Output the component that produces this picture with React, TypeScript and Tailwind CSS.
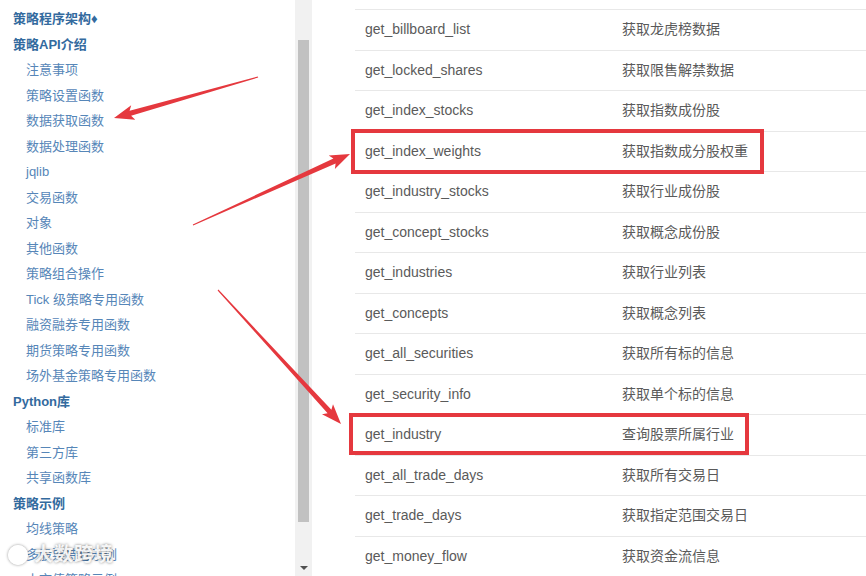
import React from 'react'

type NavItem = { label: string; level: 0 | 1 }

const navItems: NavItem[] = [
  { label: '策略程序架构♦', level: 0 },
  { label: '策略API介绍', level: 0 },
  { label: '注意事项', level: 1 },
  { label: '策略设置函数', level: 1 },
  { label: '数据获取函数', level: 1 },
  { label: '数据处理函数', level: 1 },
  { label: 'jqlib', level: 1 },
  { label: '交易函数', level: 1 },
  { label: '对象', level: 1 },
  { label: '其他函数', level: 1 },
  { label: '策略组合操作', level: 1 },
  { label: 'Tick 级策略专用函数', level: 1 },
  { label: '融资融券专用函数', level: 1 },
  { label: '期货策略专用函数', level: 1 },
  { label: '场外基金策略专用函数', level: 1 },
  { label: 'Python库', level: 0 },
  { label: '标准库', level: 1 },
  { label: '第三方库', level: 1 },
  { label: '共享函数库', level: 1 },
  { label: '策略示例', level: 0 },
  { label: '均线策略', level: 1 },
  { label: '多股票持仓示例', level: 1 },
  { label: '小市值策略示例', level: 1 },
]

const rows: [string, string][] = [
  ['get_billboard_list', '获取龙虎榜数据'],
  ['get_locked_shares', '获取限售解禁数据'],
  ['get_index_stocks', '获取指数成份股'],
  ['get_index_weights', '获取指数成分股权重'],
  ['get_industry_stocks', '获取行业成份股'],
  ['get_concept_stocks', '获取概念成份股'],
  ['get_industries', '获取行业列表'],
  ['get_concepts', '获取概念列表'],
  ['get_all_securities', '获取所有标的信息'],
  ['get_security_info', '获取单个标的信息'],
  ['get_industry', '查询股票所属行业'],
  ['get_all_trade_days', '获取所有交易日'],
  ['get_trade_days', '获取指定范围交易日'],
  ['get_money_flow', '获取资金流信息'],
]

// 红色箭头：尾细头粗
const arrowPoints = (x1: number, y1: number, x2: number, y2: number) => {
  const len = Math.hypot(x2 - x1, y2 - y1)
  const dx = (x2 - x1) / len
  const dy = (y2 - y1) / len
  const nx = -dy
  const ny = dx
  const L = 17
  const bx = x2 - dx * L
  const by = y2 - dy * L
  const wx = bx - dx * 3
  const wy = by - dy * 3
  const p = (x: number, y: number) => `${x.toFixed(1)},${y.toFixed(1)}`
  return [
    p(x1 + nx * 0.6, y1 + ny * 0.6),
    p(bx + nx * 2.6, by + ny * 2.6),
    p(wx + nx * 7.5, wy + ny * 7.5),
    p(x2, y2),
    p(wx - nx * 7.5, wy - ny * 7.5),
    p(bx - nx * 2.6, by - ny * 2.6),
    p(x1 - nx * 0.6, y1 - ny * 0.6),
  ].join(' ')
}

export default function App() {
  return (
    <div
      className="relative w-[866px] h-[576px] overflow-hidden bg-white"
      style={{ fontFamily: '"Liberation Sans", "Noto Sans CJK SC", sans-serif' }}
    >
      <div className="flex h-full">
        {/* 左侧导航 */}
        <div className="w-[295px] pt-[6px] pl-[13px]">
          {navItems.map((item) => (
            <div
              key={item.label}
              className={
                item.level === 0
                  ? 'h-[25.5px] leading-[25.5px] text-[13px] font-bold text-[#336a9e] whitespace-nowrap'
                  : 'h-[25.5px] leading-[25.5px] text-[13px] pl-[13px] text-[#5686b8] whitespace-nowrap'
              }
            >
              {item.label}
            </div>
          ))}
        </div>

        {/* 滚动条 */}
        <div className="w-[17px] h-full bg-[#f1f1f1] flex flex-col items-center">
          <div className="h-[40px]" />
          <div className="w-[11px] h-[482px] bg-[#c1c1c1]" />
          <div className="flex-1 flex items-end pb-[6px]">
            <div className="w-0 h-0 border-l-[4px] border-r-[4px] border-t-[4px] border-l-transparent border-r-transparent border-t-[#505050]" />
          </div>
        </div>

        <div className="w-[43px]" />

        {/* 函数表格 */}
        <div className="flex-1 pt-[9px]">
          {rows.map(([name, desc]) => (
            <div
              key={name}
              className="flex items-center h-[40.5px] border-t border-[#e8e8e8] text-[14px] text-[#5a5a5a]"
            >
              <div className="w-[267px] pl-[10px]">{name}</div>
              <div>{desc}</div>
            </div>
          ))}
        </div>
      </div>

      {/* 红框标注 */}
      <div className="absolute left-[351px] top-[129px] w-[413px] h-[45px] border-[4px] border-[#e5383e]" />
      <div className="absolute left-[349px] top-[413px] w-[400px] h-[42px] border-[4px] border-[#e5383e]" />

      {/* 箭头 */}
      <svg className="absolute left-0 top-0" width="866" height="576" viewBox="0 0 866 576">
        <polygon points={arrowPoints(258, 77, 114, 118)} fill="#e5383e" />
        <polygon points={arrowPoints(193, 225, 350, 154)} fill="#e5383e" />
        <polygon points={arrowPoints(218, 290, 341, 424)} fill="#e5383e" />
      </svg>

      {/* 水印 */}
      <div className="absolute left-[8px] top-[543px] flex items-center gap-[6px] text-white/90 text-[19px] font-bold leading-[24px] [text-shadow:0_0_3px_rgba(0,0,0,0.55)]">
        <span className="w-[20px] h-[20px] rounded-full border-[3px] border-white/90 [box-shadow:0_0_3px_rgba(0,0,0,0.45)]" />
        <span className="tracking-[1px]">大数跨境</span>
      </div>
    </div>
  )
}
